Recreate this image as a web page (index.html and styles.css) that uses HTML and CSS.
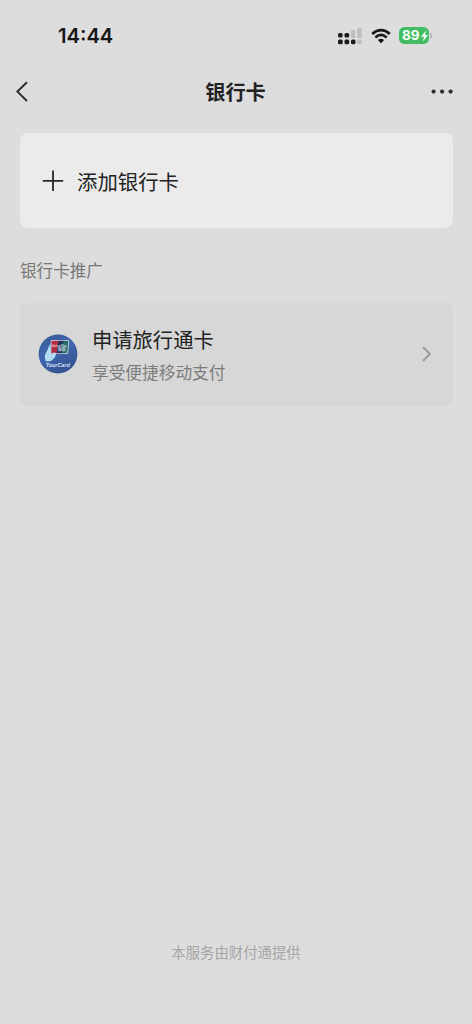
FILE: index.html
```html
<!DOCTYPE html>
<html lang="zh-CN">
<head>
<meta charset="utf-8">
<title>银行卡</title>
<link rel="stylesheet" href="styles.css">
</head>
<body>
<div class="screen">
  <header class="status">
    <span class="time">14:44</span>
    <div class="indicators">
      <svg class="signal" width="24" height="18" viewBox="0 0 24 18">
        <g fill="#1b1b1b"><rect x="0" y="6" width="4.7" height="4.6" rx="1.5"/><rect x="6.5" y="6" width="4.7" height="4.6" rx="1.5"/><rect x="0" y="12.6" width="4.7" height="4.6" rx="1.5"/><rect x="6.5" y="12.6" width="4.7" height="4.6" rx="1.5"/><rect x="13" y="12.6" width="4.5" height="4.6" rx="1.5"/></g>
        <g fill="#bdbdbd"><rect x="13" y="3" width="4.3" height="8" rx="1.3"/><rect x="19.3" y="1" width="4.3" height="10" rx="1.3"/><rect x="19.3" y="12.6" width="4.3" height="4.6" rx="1.3"/></g>
      </svg>
      <svg class="wifi" width="20" height="16" viewBox="0 0 20 16">
        <path d="M1.2 5.9Q10-1.7 18.8 5.9M4.3 9.4Q10 4.5 15.7 9.4" fill="none" stroke="#181818" stroke-width="2.7"/>
        <path d="M6.9 12Q10 9.4 13.1 12L10.6 14.8Q10 15.5 9.4 14.8Z" fill="#181818"/>
      </svg>
      <div class="battery"><span>89</span>
        <svg width="9" height="12" viewBox="0 0 8 12"><path d="M5.5.5.4 6.7h3L2.4 11.5l5.2-6.4H4.5Z" fill="#f5fff6"/></svg>
      </div>
      <i class="battery-tip"></i>
    </div>
  </header>
  <nav class="navbar">
    <svg class="back" width="14" height="22" viewBox="0 0 14 22"><path d="M12 1.2 2.4 10.6 12 20" fill="none" stroke="#303030" stroke-width="2"/></svg>
    <h1>银行卡</h1>
    <svg class="more" width="24" height="6" viewBox="0 0 24 6" fill="#303030"><circle cx="2.6" cy="2.6" r="2.15"/><circle cx="11.1" cy="2.6" r="2.15"/><circle cx="19.6" cy="2.6" r="2.15"/></svg>
  </nav>
  <main>
    <div class="add-card">
      <svg width="22" height="22" viewBox="0 0 22 22"><path d="M11 .6v20.4M.8 10.8h20.4" stroke="#292929" stroke-width="1.8"/></svg>
      <span>添加银行卡</span>
    </div>
    <h2>银行卡推广</h2>
    <div class="promo">
      <svg class="logo" width="40" height="40" viewBox="0 0 40 40">
        <defs><linearGradient id="blue" x2=".5" y2="1"><stop stop-color="#365994"/><stop offset=".5" stop-color="#4166ae"/><stop offset="1" stop-color="#365493"/></linearGradient></defs>
        <circle cx="20" cy="20" r="19.4" fill="url(#blue)"/>
        <path d="M14 5.9H29.8q1.7 0 1.5 1.7L30.1 18.5q-.2 1.6-1.9 1.6H12L12.8 7Q13 5.9 14 5.9Z" fill="#cfdbe3"/>
        <path d="M14.4 6.8h7.4l-1.7 12.4h-6.8L13.5 7.8Q13.6 6.8 14.4 6.8Z" fill="#b52d40"/>
        <path d="M20.4 6.8h5.8l-1.5 12.4h-6Z" fill="#23345b"/>
        <path d="M25.2 6.8h4.2q1.1 0 1 1l-1.1 10.3q-.1 1.1-1.2 1.1h-4.4Z" fill="#246c70"/>
        <path d="M12.4 9.2 8.7 17.5Q6.4 20.5 6.9 24L7.8 27.5 13 27Q17.8 23.5 18 19.5 17.1 17.6 15 19L13.3 20.8 12.6 18.5Z" fill="#b2dcf2"/>
        <text x="13.7" y="12.7" class="union" textLength="15" lengthAdjust="spacingAndGlyphs">UnionPay</text>
        <text x="19.8" y="16.8" class="union-cn">银联</text>
        <text x="7.7" y="33.2" class="tour" textLength="24" lengthAdjust="spacingAndGlyphs">TourCard</text>
      </svg>
      <div class="copy"><strong>申请旅行通卡</strong><p>享受便捷移动支付</p></div>
      <svg class="chevron" width="10" height="18" viewBox="0 0 10 18"><path d="m1 2 6.9 7L1 16" fill="none" stroke="#999" stroke-width="1.8"/></svg>
    </div>
  </main>
  <footer>本服务由财付通提供</footer>
</div>
</body>
</html>
```
FILE: styles.css
```css
* { box-sizing: border-box; }
body { margin: 0; background: #ddd; color: #222; font-family: "Noto Sans CJK SC", sans-serif; }
svg { display: block; flex: none; }
h1, h2, p { margin: 0; font-weight: 400; }
.screen { width: 472px; height: 1024px; display: flex; flex-direction: column; }
.status { height: 71px; padding: 1px 40px 0 58px; display: flex; align-items: center; justify-content: space-between; }
.time { font: 600 20.2px/24px Inter, sans-serif; color: #171717; }
.indicators { display: flex; align-items: center; padding-bottom: 1px; }
.wifi { margin-left: 9px; }
.battery { width: 30px; height: 17px; margin-left: 8px; padding-left: 3px; border-radius: 5.5px; background: #43bd63; color: #f5fff6; display: flex; align-items: center; }
.battery span { width: 17.5px; font: 700 13.5px/17px Inter, sans-serif; }
.battery-tip { width: 2px; height: 6px; margin-left: 1px; border-radius: 0 2px 2px 0; background: #b7bcb7; }
.navbar { height: 41px; padding: 0 17px 0 15px; display: grid; grid-template-columns: 60px 1fr 60px; align-items: center; }
.navbar h1 { padding-left: 1px; font-size: 20.2px; line-height: 28px; font-weight: 600; text-align: center; }
.more { justify-self: end; }
main { padding: 21px 19px 0 20px; }
.add-card { height: 95px; padding-left: 22px; border-radius: 8px; background: #ebebeb; display: flex; align-items: center; gap: 13px; font-size: 20.4px; line-height: 30px; }
h2 { margin-top: 30px; font-size: 16.6px; line-height: 24px; color: #777; }
.promo { height: 103px; margin-top: 21px; padding: 0 21px 2px 18px; border-radius: 8px; background: #d7d7d7; display: flex; align-items: center; }
.logo { margin-right: 14px; }
.copy { flex: 1; }
.copy strong { display: block; font-size: 20.3px; line-height: 30px; font-weight: 400; }
.copy p { margin-top: 6px; font-size: 16.7px; line-height: 24px; color: #7c7c7c; }
.union { font: italic 700 3.2px "Liberation Sans", sans-serif; fill: #e7eef5; fill-opacity: .85; }
.union-cn { font: 700 4px "Noto Sans CJK SC", sans-serif; fill: #e7eef5; fill-opacity: .8; }
.tour { font: italic 700 5.5px "Liberation Sans", sans-serif; fill: #d7e4f5; }
footer { margin: auto 0 61px; font-size: 14.4px; line-height: 22px; text-align: center; color: #a6a6a6; }
```
